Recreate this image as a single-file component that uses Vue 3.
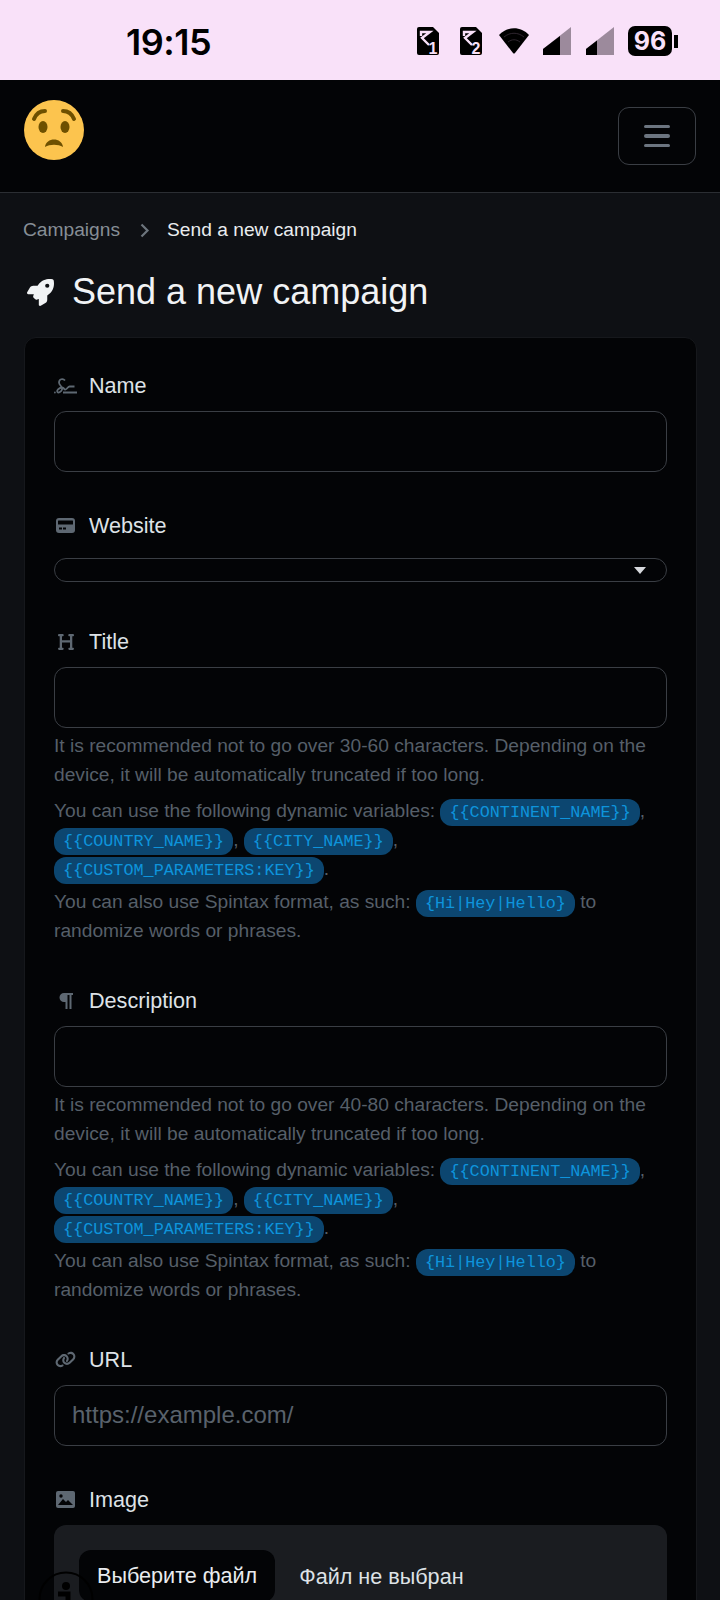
<script setup>
const dynamicVars = ["{{CONTINENT_NAME}}", "{{COUNTRY_NAME}}", "{{CITY_NAME}}", "{{CUSTOM_PARAMETERS:KEY}}"];

const textFields = [
  { label: "Title", icon: "title", min: "30-60" },
  { label: "Description", icon: "para", min: "40-80" }
];
</script>

<template>
  <div class="page">
    <div class="status-bar">
      <span class="clock">19:15</span>
      <div class="status-icons">
        <svg class="sim" width="22" height="32" viewBox="0 0 22 32">
          <path d="M2 0h14l6 6v20a2 2 0 0 1-2 2H2a2 2 0 0 1-2-2V2a2 2 0 0 1 2-2z" fill="#000" />
          <path d="M4 9V5h9L5 11l7 7" fill="none" stroke="#f9e1f9" stroke-width="2.400" />
          <text x="11.500" y="27" class="sim-num">1</text>
        </svg>
        <svg class="sim sim-two" width="22" height="32" viewBox="0 0 22 32">
          <path d="M2 0h14l6 6v20a2 2 0 0 1-2 2H2a2 2 0 0 1-2-2V2a2 2 0 0 1 2-2z" fill="#000" />
          <path d="M4 9V5h9L5 11l7 7" fill="none" stroke="#f9e1f9" stroke-width="2.400" />
          <text x="11.500" y="27" class="sim-num">2</text>
        </svg>
        <svg class="wifi" width="30" height="26" viewBox="0 0 30 26">
          <path d="M0 7C8-2 22-2 30 7L16 25a1.400 1.400 0 0 1-2 0z" fill="#000" />
          <path d="M5 9c6-5 14-5 20 0M9 14c4-3 8-3 12 0" fill="none" stroke="#3a2f3a" stroke-width="0.800" />
        </svg>
        <svg class="signal" width="28" height="28" viewBox="0 0 28 28">
          <path d="M0 28V22L28 0v28z" fill="#9c8a9c" />
          <path d="M0 28V22L17 9v19z" fill="#000" />
        </svg>
        <svg class="signal" width="28" height="28" viewBox="0 0 28 28">
          <path d="M0 28V22L28 0v28z" fill="#9c8a9c" />
          <path d="M0 28V22L11 13.500V28z" fill="#000" />
        </svg>
        <div class="battery"><span>96</span></div>
        <i class="battery-tip"></i>
      </div>
    </div>

    <header class="topbar">
      <svg class="logo" width="60" height="60" viewBox="0 0 60 60">
        <circle cx="30" cy="30" r="30" fill="#fcc44e" />
        <ellipse cx="19" cy="27" rx="4.500" ry="6" fill="#6e5000" />
        <ellipse cx="41" cy="27" rx="4.500" ry="6" fill="#6e5000" />
        <path d="M10 19c2-5 6-8 11-8M50 19c-2-5-6-8-11-8" fill="none" stroke="#6e5000" stroke-width="4" stroke-linecap="round" />
        <path d="M21 47c1-10 17-10 18 0-5-3-13-3-18 0z" fill="#6e5000" />
      </svg>
      <button class="toggler" type="button">
        <span></span><span></span><span></span>
      </button>
    </header>

    <main class="content">
      <nav class="crumbs">
        <span class="crumb-link">Campaigns</span>
        <svg width="10" height="15" viewBox="0 0 10 15">
          <path d="M1.500 1.500l6 6-6 6" fill="none" stroke="#6c757d" stroke-width="2.200" />
        </svg>
        <span class="crumb-current">Send a new campaign</span>
      </nav>

      <h1 class="page-title">
        <svg width="27" height="27" viewBox="0 0 512 512">
          <path fill="#f1f3f5" d="M156.600 384.900L125.700 354c-8.500-8.500-11.500-20.800-7.700-32.200 3-8.900 7-20.500 11.800-33.800H24c-8.600 0-16.600-4.600-20.900-12.100s-4.200-16.700.2-24.100l52.500-88.500c13-21.900 36.500-35.300 61.900-35.300h82.300c2.400-4 4.800-7.700 7.200-11.300C289.100-4.100 411.100-8.100 483.900 5.300c11.600 2.100 20.600 11.200 22.800 22.800 13.400 72.900 9.300 194.800-111.400 276.700-3.500 2.400-7.300 4.800-11.300 7.200v82.300c0 25.400-13.400 49-35.300 61.900l-88.500 52.500c-7.400 4.400-16.600 4.500-24.100.2s-12.100-12.200-12.100-20.900V380.800c-14.100 4.900-26.400 8.900-35.700 11.900-11.200 3.600-23.400.5-31.800-7.800zM384 168a40 40 0 1 0 0-80 40 40 0 1 0 0 80z" />
        </svg>
        <span>Send a new campaign</span>
      </h1>

      <section class="card">
        <div class="field">
          <label>
            <span class="ico">
              <svg width="23" height="17" viewBox="0 0 23 17">
                <path d="M11 2.500C9 0 5 1 5 4.500c0 3 4 4 3 7-.6 2-3.500 4-4.500 2.500s1-4 4.500-4.500c2-.3 2 2.500 3.500 2 2-.7 2.500-3 4-3h5M9 14.500h14" fill="none" stroke="#5e6872" stroke-width="1.800" />
                <circle cx="0.900" cy="14.500" r="0.900" fill="#5e6872" />
              </svg>
            </span>
            Name
          </label>
          <div class="input"></div>
        </div>

        <div class="field">
          <label>
            <span class="ico">
              <svg width="19" height="15" viewBox="0 0 19 15">
                <rect width="19" height="15" rx="3" fill="#5e6872" />
                <rect x="2" y="2.500" width="15" height="4" rx="0.500" fill="#030406" />
                <rect x="3" y="9.500" width="3" height="2" fill="#030406" />
                <rect x="7" y="9.500" width="3" height="2" fill="#030406" />
              </svg>
            </span>
            Website
          </label>
          <div class="select"><i class="caret"></i></div>
        </div>

        <div v-for="field in textFields" :key="field.label" class="field text-field">
          <label>
            <span class="ico">
              <svg v-if="field.icon === 'title'" width="16" height="18" viewBox="0 32 448 448">
                <path fill="#5e6872" d="M0 64C0 46.300 14.300 32 32 32h96c17.700 0 32 14.300 32 32s-14.300 32-32 32h-16v112h224V96h-16c-17.700 0-32-14.300-32-32s14.300-32 32-32h96c17.700 0 32 14.300 32 32s-14.300 32-32 32h-16v320h16c17.700 0 32 14.300 32 32s-14.300 32-32 32h-96c-17.700 0-32-14.300-32-32s14.300-32 32-32h16V272H112v144h16c17.700 0 32 14.300 32 32s-14.300 32-32 32H32c-17.700 0-32-14.300-32-32s14.300-32 32-32h16V96H32C14.300 96 0 81.700 0 64z" />
              </svg>
              <svg v-else width="15" height="16" viewBox="0 0 15 16">
                <path d="M6 0h9v2h-1.500v14h-2V2H9.500v14h-2V9H6A4.500 4.500 0 0 1 6 0z" fill="#5e6872" />
              </svg>
            </span>
            {{ field.label }}
          </label>
          <div class="input"></div>
          <p class="help first">It is recommended not to go over {{ field.min }} characters. Depending on the device, it will be automatically truncated if too long.</p>
          <p class="help vars">You can use the following dynamic variables: <template v-for="(v, i) in dynamicVars" :key="v"><code>{{ v }}</code>{{ i < dynamicVars.length - 1 ? ", " : "." }}</template></p>
          <p class="help spintax">You can also use Spintax format, as such: <code>{Hi|Hey|Hello}</code> to randomize words or phrases.</p>
        </div>

        <div class="field">
          <label>
            <span class="ico">
              <svg width="21" height="17" viewBox="0 0 640 512">
                <path fill="#5e6872" d="M579.800 267.700c56.500-56.500 56.500-148 0-204.500-50-50-128.800-56.500-186.300-15.400l-1.600 1.100c-14.400 10.300-17.700 30.300-7.400 44.600s30.300 17.700 44.600 7.400l1.600-1.100c32.100-22.900 76-19.300 103.800 8.600 31.500 31.500 31.500 82.500 0 114L422.300 334.800c-31.500 31.500-82.500 31.500-114 0-27.900-27.900-31.500-71.800-8.600-103.800l1.100-1.600c10.300-14.400 6.900-34.400-7.400-44.600s-34.400-6.900-44.600 7.400l-1.100 1.600C206.500 251.200 213 330 263 380c56.500 56.500 148 56.500 204.500 0zM60.200 244.300c-56.500 56.500-56.500 148 0 204.500 50 50 128.800 56.500 186.300 15.400l1.600-1.100c14.400-10.300 17.700-30.300 7.400-44.600s-30.300-17.700-44.600-7.400l-1.600 1.100c-32.100 22.900-76 19.300-103.800-8.600C74 372 74 321 105.500 289.500l112.200-112.300c31.500-31.500 82.500-31.500 114 0 27.900 27.900 31.500 71.800 8.600 103.900l-1.100 1.600c-10.300 14.400-6.900 34.400 7.400 44.600s34.400 6.900 44.600-7.400l1.100-1.600C433.500 260.800 427 182 377 132c-56.500-56.500-148-56.500-204.500 0z" />
              </svg>
            </span>
            URL
          </label>
          <div class="input placeholder">https://example.com/</div>
        </div>

        <div class="field">
          <label>
            <span class="ico">
              <svg width="19" height="17" viewBox="0 0 19 17">
                <rect width="19" height="17" rx="2" fill="#5e6872" />
                <path d="M2 14l5-6 3 3 2-2 5 5z" fill="#030406" />
                <circle cx="5" cy="5" r="1.700" fill="#030406" />
              </svg>
            </span>
            Image
          </label>
          <div class="file-box">
            <span class="file-btn">Выберите файл</span>
            <span class="file-name">Файл не выбран</span>
          </div>
        </div>
      </section>
    </main>

    <svg class="help-bubble" width="56" height="56" viewBox="0 0 56 56">
      <circle cx="28" cy="28" r="26.500" fill="none" stroke="#000" stroke-width="2" />
      <circle cx="28" cy="15" r="4" fill="#000" />
      <path d="M20 23h10v16" fill="none" stroke="#000" stroke-width="5" />
    </svg>
  </div>
</template>

<style>
html, body {
  margin: 0;
  background: #0e1014;
}
</style>

<style scoped>
.page {
  position: relative;
  width: 720px;
  height: 1600px;
  overflow: hidden;
  background: #0e1014;
  font-family: "Liberation Sans", Arial, sans-serif;
  color: #e9ecef;
}

.status-bar {
  height: 80px;
  background: #f9e1f9;
  display: flex;
  align-items: center;
  justify-content: space-between;
  box-sizing: border-box;
  padding: 0 42px 0 126px;
  color: #000;
}

.clock {
  font-family: Inter, "Noto Sans", sans-serif;
  font-size: 36px;
  font-weight: 600;
  letter-spacing: -0.5px;
  padding-top: 4px;
}

.status-icons {
  display: flex;
  align-items: center;
  padding-top: 2px;
}

.sim {
  margin-right: 21px;
  margin-bottom: -4px;
}

.sim-two {
  margin-right: 17px;
}

.sim-num {
  font-family: "Liberation Sans", sans-serif;
  font-size: 16px;
  font-weight: 700;
  fill: #f9e1f9;
}

.wifi {
  margin-right: 14px;
}

.signal {
  margin-right: 15px;
}

.battery {
  width: 44px;
  height: 30px;
  margin-left: -1px;
  background: #000;
  border-radius: 7px;
  color: #f9e1f9;
  font-family: Inter, "Noto Sans", sans-serif;
  font-size: 25px;
  font-weight: 700;
  display: flex;
  align-items: center;
  justify-content: center;
}

.battery-tip {
  width: 4px;
  height: 13px;
  background: #000;
  margin-left: 2px;
}

.topbar {
  height: 113px;
  box-sizing: border-box;
  background: #030406;
  border-bottom: 1px solid #2b2e33;
  display: flex;
  justify-content: space-between;
  align-items: flex-start;
  padding: 20px 24px 0 24px;
}

.toggler {
  width: 78px;
  height: 58px;
  margin-top: 7px;
  background: transparent;
  border: 1px solid #3a3e44;
  border-radius: 11px;
  display: flex;
  flex-direction: column;
  align-items: center;
  justify-content: center;
  gap: 6px;
  padding: 0;
}

.toggler span {
  width: 26px;
  height: 3.5px;
  border-radius: 2px;
  background: #6c7580;
}

.content {
  padding: 0 23px;
}

.crumbs {
  display: flex;
  align-items: center;
  height: 24px;
  margin-top: 25px;
  font-size: 19.2px;
  gap: 20px;
}

.crumbs svg {
  margin-right: -3px;
}

.crumb-link {
  color: #868e96;
}

.crumb-current {
  color: #e9ecef;
}

.page-title {
  margin: 29px 0 0;
  height: 42px;
  display: flex;
  align-items: center;
  gap: 18px;
  font-size: 36px;
  font-weight: 400;
  color: #f1f3f5;
  padding-left: 4px;
}

.card {
  margin: 24px 0 0 1px;
  background: #030406;
  border: 1px solid #16181c;
  border-radius: 12px;
  padding: 23px 29px 0;
  height: 1300px;
  box-sizing: border-box;
}

.field {
  margin-bottom: 29px;
}

.text-field {
  margin-bottom: 30px;
}

label {
  display: flex;
  align-items: center;
  height: 50px;
  font-size: 21.6px;
  color: #dee2e6;
}

.ico {
  width: 23px;
  margin-right: 12px;
  flex: none;
  display: flex;
  justify-content: center;
}

.input {
  height: 60.8px;
  box-sizing: border-box;
  border: 1px solid #3a3e44;
  border-radius: 12px;
  display: flex;
  align-items: center;
}

.placeholder {
  padding-left: 17px;
  font-size: 24px;
  color: #59626c;
}

.select {
  position: relative;
  height: 24px;
  margin: 7px 0 35px;
  box-sizing: border-box;
  border: 1px solid #3a3e44;
  border-radius: 12px;
}

.caret {
  position: absolute;
  right: 20px;
  top: 8px;
  border: 6px solid transparent;
  border-top: 7px solid #d6d8dc;
  border-bottom: 0;
}

.help {
  margin: 0;
  font-size: 19.2px;
  line-height: 28.8px;
  color: #565f69;
}

.first {
  margin-top: 4.5px;
}

.vars {
  margin-top: 6.5px;
  line-height: 29px;
}

.spintax {
  margin-top: 5px;
}

code {
  font-family: "Liberation Mono", monospace;
  font-size: 16.8px;
  line-height: 1;
  color: #0e94dc;
  background: #0c4670;
  padding: 4px 9px;
  border-radius: 12px;
}

.file-box {
  background: #1a1c20;
  border-radius: 12px;
  height: 120px;
  padding: 25px;
  box-sizing: border-box;
  display: flex;
  align-items: flex-start;
  gap: 24px;
}

.file-btn {
  background: #030406;
  color: #e9ecef;
  font-size: 21.6px;
  border-radius: 12px;
  padding: 13px 18px;
}

.file-name {
  font-size: 21.6px;
  padding-top: 14px;
  color: #dee2e6;
}

.help-bubble {
  position: absolute;
  left: 38px;
  top: 1571px;
}
</style>
